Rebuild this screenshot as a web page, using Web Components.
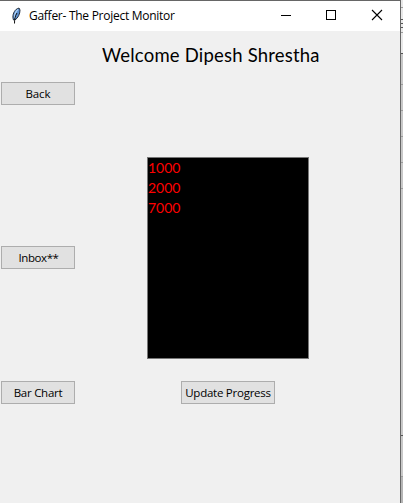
<!DOCTYPE html>
<html lang="en"><head><meta charset="utf-8"><title>Gaffer- The Project Monitor</title>
<style>html,body{margin:0;width:403px;height:503px;overflow:hidden;background:#c8c8c8}
.back{grid-area:back}.list{grid-area:list}
.inbox{grid-area:inbox;padding-top:89px;--ls:-.4px;--indent:1px}
.chart{grid-area:chart;--ls:-.26px}
.update{grid-area:update;padding-left:100px;--w:94px;--ls:-.25px}</style></head><body>
<app-window>
  <title-bar slot="title">Gaffer- The Project Monitor</title-bar>
  <page-heading>Welcome Dipesh Shrestha</page-heading>
  <push-button class="back">Back</push-button>
  <list-box class="list"><list-item>1000</list-item><list-item>2000</list-item><list-item>7000</list-item></list-box>
  <push-button class="inbox">Inbox**</push-button>
  <push-button class="chart">Bar Chart</push-button>
  <push-button class="update">Update Progress</push-button>
</app-window>
<script>
function define(name, html){
  const t=document.createElement('template');t.innerHTML=html;
  customElements.define(name,class extends HTMLElement{
    constructor(){super();this.attachShadow({mode:'open'}).append(t.content.cloneNode(true));}
  });
}
define('edge-strip',`<style>:host{display:block}svg{display:block}</style>
<svg width="2" height="503" shape-rendering="crispEdges"><path fill="#e8e8e8" d="M0 0h2v53H0z"/><path fill="#c8c8c8" d="M0 53h2v423H0z"/><path fill="#b5b5b5" d="M0 476h2v27H0z"/>
<path fill="#9c9c9c" d="M0 7h2v1H0zM0 32h2v1H0zM0 84h2v1H0zM0 110h2v1H0zM0 136h2v1H0zM0 162h2v1H0zM0 188h2v1H0zM0 476h2v1H0z"/>
<path fill="#555" d="M0 19h2v1H0zM0 23h2v1H0zM0 27h2v1H0zM0 53h2v1H0zM0 435h2v1H0z"/></svg>`);
define('app-window',`<style>
:host{display:flex;width:403px;height:503px}
.win{box-sizing:border-box;width:401px;height:503px;border-top:1px solid #666;border-right:1px solid #666;background:#f0f0f0}
.body{display:grid;height:472px;grid-template-columns:75px 6px 1fr;
grid-template-rows:51px 23px 52px 202px 22px 23px;
grid-template-areas:"head head head" "back . ." ". . ." "inbox . list" ". . ." "chart . update"}
</style><div class="win"><slot name="title"></slot><div class="body"><slot></slot></div></div><edge-strip></edge-strip>`);
define('title-bar',`<style>
:host{display:flex;align-items:center;height:30px;background:#fff;color:#000;font:12px/30px "Open Sans","Noto Sans",sans-serif;letter-spacing:-.27px}
.icon{margin-left:10px;width:12px;height:18px;margin-right:7px;flex:none}
.t{flex:1;white-space:nowrap}.ctl{display:flex;width:134px;height:30px;flex:none}</style>
<svg class="icon" viewBox="0 0 12 18"><path d="M3.500 13C2 9 3.500 5 6 2.500L9 1l1 2c0 4-2 8-5 10z" fill="#5c91d2" stroke="#27313f" stroke-width="1"/><path d="M8 2.500C5 5 4.500 8 4.500 11" fill="none" stroke="#b5d7fa" stroke-width="1.1"/><path d="M7 6C5 9 4.500 12 4.500 16.500" fill="none" stroke="#111" stroke-width="1"/></svg>
<span class="t"><slot></slot></span>
<svg class="ctl" width="134" height="30" viewBox="0 0 134 30" fill="none" stroke="#000"><path d="M15 14.5h10M60.500 9.500h9v9h-9z" shape-rendering="crispEdges"/><path d="M106 9l10 10M116 9l-10 10" stroke-width="1.1"/></svg>`);
define('page-heading',`<style>:host{grid-area:head;display:block;padding-left:102px;font:18.5px/49px Lato,sans-serif;letter-spacing:.2px;color:#000;white-space:nowrap}</style><slot></slot>`);
define('push-button',`<style>:host{display:block;box-sizing:border-box;padding-left:1px}
button{display:block;box-sizing:border-box;width:var(--w,74px);height:23px;margin:0;padding:0 0 0 var(--indent,0);border:1px solid #adadad;background:#e1e1e1;color:#000;font:11.5px/21px "Open Sans","Noto Sans",sans-serif;letter-spacing:var(--ls,-.1px);white-space:nowrap}</style><button><slot></slot></button>`);
define('list-box',`<style>:host{display:block;box-sizing:border-box;width:162px;height:202px;margin-left:66px;border:1px solid #777;background:#000}</style><slot></slot>`);
define('list-item',`<style>:host{display:block;height:20px;font:14px/20px Lato,sans-serif;color:#f00}</style><slot></slot>`);
</script></body></html>
